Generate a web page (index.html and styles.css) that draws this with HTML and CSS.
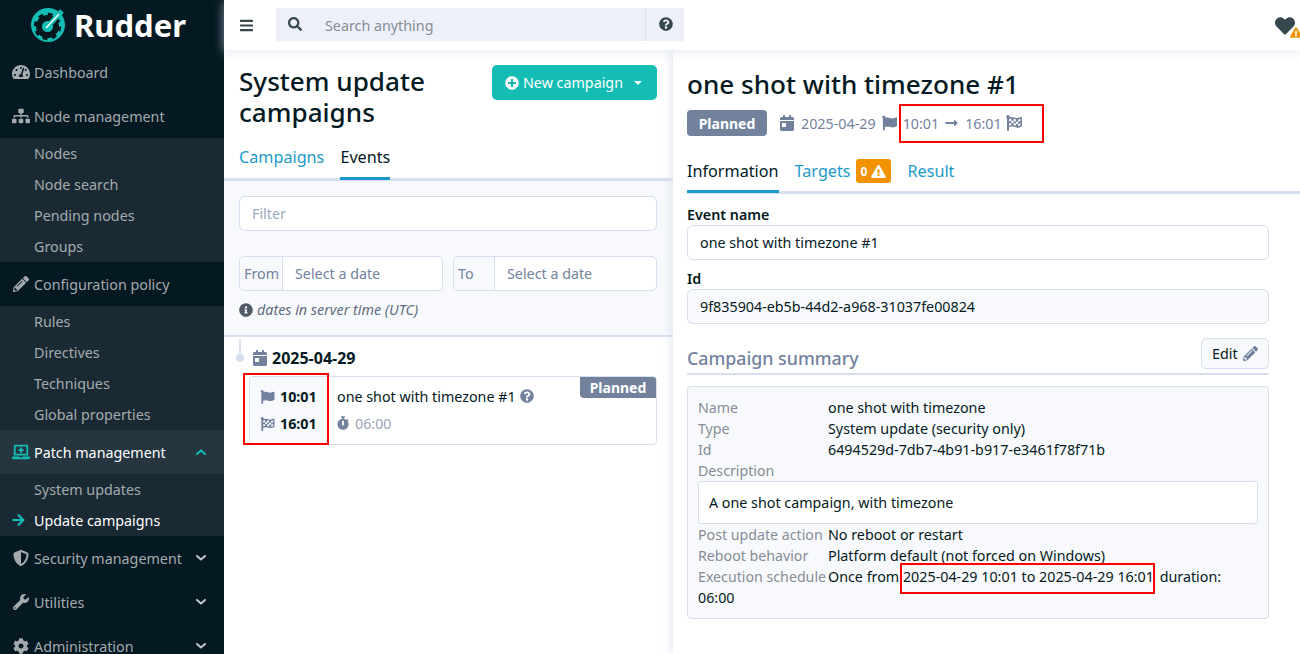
FILE: index.html
```html
<!DOCTYPE html>
<html lang="en">
<head>
<meta charset="utf-8">
<title>Rudder - System update campaigns</title>
<link rel="stylesheet" href="styles.css">
</head>
<body>
<svg class="sprite" xmlns="http://www.w3.org/2000/svg">
<symbol id="i-search" viewBox="0 0 512 512"><path d="M505 442.7L405.3 343c-4.5-4.5-10.6-7-17-7H372c27.6-35.3 44-79.7 44-128C416 93.1 322.9 0 208 0S0 93.1 0 208s93.1 208 208 208c48.3 0 92.7-16.4 128-44v16.3c0 6.4 2.5 12.5 7 17l99.7 99.7c9.4 9.4 24.6 9.4 33.9 0l28.3-28.3c9.4-9.4 9.4-24.6.1-34zM208 336c-70.7 0-128-57.2-128-128 0-70.7 57.2-128 128-128 70.7 0 128 57.2 128 128 0 70.7-57.2 128-128 128z"/></symbol>
<symbol id="i-bars" viewBox="0 0 448 512"><path d="M16 132h416c8.837 0 16-7.163 16-16V76c0-8.837-7.163-16-16-16H16C7.163 60 0 67.163 0 76v40c0 8.837 7.163 16 16 16zm0 160h416c8.837 0 16-7.163 16-16v-40c0-8.837-7.163-16-16-16H16c-8.837 0-16 7.163-16 16v40c0 8.837 7.163 16 16 16zm0 160h416c8.837 0 16-7.163 16-16v-40c0-8.837-7.163-16-16-16H16c-8.837 0-16 7.163-16 16v40c0 8.837 7.163 16 16 16z"/></symbol>
<symbol id="i-question" viewBox="0 0 512 512"><path d="M504 256c0 136.997-111.043 248-248 248S8 392.997 8 256C8 119.083 119.043 8 256 8s248 111.083 248 248zM262.655 90c-54.497 0-89.255 22.957-116.549 63.758-3.536 5.286-2.353 12.415 2.715 16.258l34.699 26.31c5.205 3.947 12.621 3.008 16.665-2.122 17.864-22.658 30.113-35.797 57.303-35.797 20.429 0 45.698 13.148 45.698 32.958 0 14.976-12.363 22.667-32.534 33.976C247.128 238.528 216 254.941 216 296v4c0 6.627 5.373 12 12 12h56c6.627 0 12-5.373 12-12v-1.333c0-28.462 83.186-29.647 83.186-106.667 0-58.002-60.165-102-116.531-102zM256 338c-25.365 0-46 20.635-46 46 0 25.364 20.635 46 46 46s46-20.636 46-46c0-25.365-20.635-46-46-46z"/></symbol>
<symbol id="i-plus" viewBox="0 0 512 512"><path d="M256 8C119 8 8 119 8 256s111 248 248 248 248-111 248-248S393 8 256 8zm144 276c0 6.6-5.4 12-12 12h-92v92c0 6.6-5.4 12-12 12h-56c-6.6 0-12-5.4-12-12v-92h-92c-6.6 0-12-5.4-12-12v-56c0-6.6 5.4-12 12-12h92v-92c0-6.6 5.4-12 12-12h56c6.6 0 12 5.4 12 12v92h92c6.6 0 12 5.4 12 12v56z"/></symbol>
<symbol id="i-warn" viewBox="0 0 576 512"><path d="M569.517 440.013C587.975 472.007 564.806 512 527.94 512H48.054c-36.937 0-59.999-40.055-41.577-71.987L246.423 23.985c18.467-32.009 64.72-31.951 83.154 0l239.94 416.028zM288 354c-25.405 0-46 20.595-46 46s20.595 46 46 46 46-20.595 46-46-20.595-46-46-46zm-43.673-165.346l7.418 136c.347 6.364 5.609 11.346 11.982 11.346h48.546c6.373 0 11.635-4.982 11.982-11.346l7.418-136c.375-6.874-5.098-12.654-11.982-12.654h-63.383c-6.884 0-12.356 5.78-11.981 12.654z"/></symbol>
<symbol id="i-heart" viewBox="0 0 512 512"><path d="M462.3 62.6C407.5 15.9 326 24.3 275.7 76.2L256 96.5l-19.7-20.3C186.1 24.3 104.5 15.9 49.7 62.6c-62.8 53.6-66.1 149.8-9.9 207.9l193.5 199.8c12.5 12.9 32.8 12.9 45.3 0l193.5-199.8c56.3-58.1 53-154.3-9.8-207.9z"/></symbol>
<symbol id="i-cal" viewBox="0 0 448 512"><path d="M0 464c0 26.5 21.5 48 48 48h352c26.5 0 48-21.5 48-48V192H0v272zm64-192c0-8.8 7.2-16 16-16h96c8.8 0 16 7.2 16 16v96c0 8.8-7.2 16-16 16H80c-8.8 0-16-7.2-16-16v-96zM400 64h-48V16c0-8.8-7.2-16-16-16h-32c-8.8 0-16 7.2-16 16v48H160V16c0-8.8-7.2-16-16-16h-32c-8.8 0-16 7.2-16 16v48H48C21.5 64 0 85.5 0 112v48h448v-48c0-26.5-21.5-48-48-48z"/></symbol>
<symbol id="i-flag" viewBox="0 0 512 512"><path d="M349.565 98.783C295.978 98.783 251.721 64 184.348 64c-24.955 0-47.309 4.384-68.045 12.013a55.947 55.947 0 0 0 3.586-23.562C118.117 24.015 94.806 1.206 66.338.048 34.345-1.254 8 24.296 8 56c0 19.026 9.497 35.825 24 45.945V488c0 13.255 10.745 24 24 24h16c13.255 0 24-10.745 24-24v-94.4c28.311-12.064 63.582-22.122 114.435-22.122 53.588 0 97.844 34.783 165.217 34.783 48.169 0 86.667-16.294 122.505-40.858C506.84 359.452 512 349.571 512 339.045v-243.1c0-23.393-24.269-38.87-45.485-29.016-34.338 15.948-76.454 31.854-116.95 31.854z"/></symbol>
<symbol id="i-check" viewBox="0 0 512 512"><path d="M243.2 189.9V258c26.1 5.9 49.3 15.6 73.6 22.3v-68.2c-26-5.8-49.4-15.5-73.6-22.2zm223.3-123c-34.3 15.9-76.5 31.9-117 31.9C296 98.8 251.7 64 184.3 64c-25 0-47.3 4.4-68 12 2.8-7.3 4.1-15.2 3.6-23.6C118.1 24 94.8 1.2 66.3 0 34.3-1.3 8 24.3 8 56c0 19 9.5 35.8 24 45.9V488c0 13.3 10.7 24 24 24h16c13.3 0 24-10.7 24-24v-94.4c28.3-12.1 63.6-22.1 114.4-22.1 53.6 0 97.8 34.8 165.2 34.8 48.2 0 86.7-16.3 122.5-40.9 8.7-6 13.8-15.8 13.8-26.4V95.9c.1-23.3-24.2-38.8-45.4-29zM169.6 325.5c-25.8 2.7-50 8.2-73.6 16.6v-70.5c26.2-9.3 47.5-15 73.6-17.4zM464 191c-23.6 9.8-46.3 19.5-73.6 23.9V286c24.8-3.4 51.4-11.8 73.6-26v70.5c-25.1 16.1-48.5 24.7-73.6 27.1V286c-27 3.7-47.9 1.5-73.6-5.6v67.4c-23.9-7.4-47.3-16.7-73.6-21.3V258c-19.7-4.4-40.8-6.8-73.6-3.8v-70c-22.4 3.1-44.6 10.2-73.6 20.9v-70.5c33.2-12.2 50.1-19.8 73.6-22v71.6c27-3.7 48.4-1.3 73.6 5.7v-67.4c23.7 7.4 47.2 16.7 73.6 21.3v68.4c23.7 5.3 47.6 6.9 73.6 2.7V143c27-4.8 52.3-13.6 73.6-22.5z"/></symbol>
<symbol id="i-dash" viewBox="0 0 576 512"><path d="M288 32C128.94 32 0 160.94 0 320c0 52.8 14.25 102.26 39.06 144.8 5.61 9.62 16.3 15.2 27.44 15.2h443c11.14 0 21.83-5.58 27.44-15.2C561.75 422.26 576 372.8 576 320c0-159.06-128.94-288-288-288zm0 64c14.71 0 26.58 10.13 30.32 23.65-1.11 2.26-2.64 4.23-3.45 6.67l-9.22 27.67c-5.13 3.49-10.97 6.01-17.64 6.01-17.67 0-32-14.33-32-32S270.33 96 288 96zM96 384c-17.67 0-32-14.33-32-32s14.33-32 32-32 32 14.33 32 32-14.33 32-32 32zm48-160c-17.67 0-32-14.33-32-32s14.33-32 32-32 32 14.33 32 32-14.33 32-32 32zm246.77-72.41l-61.33 184C343.13 347.33 352 364.54 352 384c0 11.72-3.38 22.55-8.88 32H232.88c-5.5-9.45-8.88-20.28-8.88-32 0-33.94 26.5-61.43 59.9-63.59l61.34-184.01c4.17-12.56 17.73-19.45 30.36-15.17 12.57 4.19 19.35 17.79 15.17 30.36zm14.66 57.2l15.52-46.55c3.47-1.29 7.13-2.23 11.05-2.23 17.67 0 32 14.33 32 32s-14.33 32-32 32c-11.38-.01-20.89-6.28-26.57-15.22zM480 384c-17.67 0-32-14.33-32-32s14.33-32 32-32 32 14.33 32 32-14.33 32-32 32z"/></symbol>
<symbol id="i-sitemap" viewBox="0 0 640 512"><path d="M128 352H32c-17.67 0-32 14.33-32 32v96c0 17.67 14.33 32 32 32h96c17.67 0 32-14.33 32-32v-96c0-17.67-14.33-32-32-32zm-24-80h192v48h48v-48h192v48h48v-57.59c0-21.17-17.23-38.41-38.41-38.41H344v-64h40c17.67 0 32-14.33 32-32V32c0-17.67-14.33-32-32-32H256c-17.67 0-32 14.33-32 32v96c0 17.67 14.33 32 32 32h40v64H94.41C73.23 224 56 241.23 56 262.41V320h48v-48zm264 80h-96c-17.67 0-32 14.33-32 32v96c0 17.67 14.33 32 32 32h96c17.67 0 32-14.33 32-32v-96c0-17.67-14.33-32-32-32zm240 0h-96c-17.67 0-32 14.33-32 32v96c0 17.67 14.33 32 32 32h96c17.67 0 32-14.33 32-32v-96c0-17.67-14.33-32-32-32z"/></symbol>
<symbol id="i-pencil" viewBox="0 0 512 512"><path d="M497.9 142.1l-46.1 46.1c-4.7 4.7-12.3 4.7-17 0l-111-111c-4.7-4.7-4.7-12.3 0-17l46.1-46.1c18.7-18.7 49.1-18.7 67.9 0l60.1 60.1c18.8 18.7 18.8 49.1 0 67.9zM284.2 99.8L21.6 362.4.4 483.9c-2.9 16.4 11.4 30.6 27.8 27.8l121.5-21.3 262.6-262.6c4.7-4.7 4.7-12.3 0-17l-111-111c-4.8-4.7-12.4-4.7-17.1 0zM124.1 339.9c-5.5-5.5-5.5-14.3 0-19.8l154-154c5.5-5.5 14.3-5.5 19.8 0s5.5 14.3 0 19.8l-154 154c-5.5 5.5-14.3 5.5-19.8 0zM88 424h48v36.3l-64.5 11.3-31.1-31.1L51.7 376H88v48z"/></symbol>
<symbol id="i-laptop" viewBox="0 0 640 512"><path d="M232 224h56v56a8 8 0 0 0 8 8h48a8 8 0 0 0 8-8v-56h56a8 8 0 0 0 8-8v-48a8 8 0 0 0-8-8h-56v-56a8 8 0 0 0-8-8h-48a8 8 0 0 0-8 8v56h-56a8 8 0 0 0-8 8v48a8 8 0 0 0 8 8zM576 48a48.14 48.14 0 0 0-48-48H112a48.14 48.14 0 0 0-48 48v336h512zm-64 272H128V64h384zm112 96H381.54c-.74 19.81-14.71 32-32.74 32H288c-18.69 0-33.02-17.47-32.77-32H16a16 16 0 0 0-16 16v16a64.19 64.19 0 0 0 64 64h512a64.19 64.19 0 0 0 64-64v-16a16 16 0 0 0-16-16z"/></symbol>
<symbol id="i-shield" viewBox="0 0 512 512"><path d="M466.5 83.7l-192-80a48.15 48.15 0 0 0-36.9 0l-192 80C27.7 91.1 16 108.6 16 128c0 198.5 114.5 335.7 221.5 380.3 11.8 4.9 25.1 4.9 36.9 0C360.1 472.6 496 349.3 496 128c0-19.4-11.7-36.9-29.5-44.3zM256.1 446.3l-.1-381 175.9 73.3c-3.3 151.4-82.1 261.1-175.8 307.7z"/></symbol>
<symbol id="i-wrench" viewBox="0 0 512 512"><path d="M507.73 109.1c-2.24-9.03-13.54-12.09-20.12-5.51l-74.36 74.36-67.88-11.31-11.31-67.88 74.36-74.36c6.62-6.62 3.43-17.9-5.66-20.16-47.38-11.74-99.55.91-136.58 37.93-39.64 39.64-50.55 97.1-34.05 147.2L18.74 402.76c-24.99 24.99-24.99 65.51 0 90.5 24.99 24.99 65.51 24.99 90.5 0l213.21-213.21c50.12 16.71 107.47 5.68 147.37-34.22 37.07-37.07 49.7-89.32 37.91-136.73zM64 472c-13.25 0-24-10.75-24-24 0-13.26 10.75-24 24-24s24 10.74 24 24c0 13.25-10.75 24-24 24z"/></symbol>
<symbol id="i-cog" viewBox="0 0 512 512"><path d="M487.4 315.7l-42.6-24.6c4.3-23.2 4.3-47 0-70.2l42.6-24.6c4.9-2.8 7.1-8.6 5.5-14-11.1-35.6-30-67.8-54.7-94.6-3.8-4.1-10-5.1-14.8-2.3L380.8 110c-17.9-15.4-38.5-27.3-60.8-35.1V25.8c0-5.6-3.9-10.5-9.4-11.7-36.7-8.2-74.3-7.8-109.2 0-5.5 1.2-9.4 6.1-9.4 11.7V75c-22.2 7.9-42.8 19.8-60.8 35.1L88.7 85.5c-4.9-2.8-11-1.9-14.8 2.3-24.7 26.7-43.6 58.9-54.7 94.6-1.7 5.4.6 11.2 5.5 14L67.3 221c-4.3 23.2-4.3 47 0 70.2l-42.6 24.6c-4.9 2.8-7.1 8.6-5.5 14 11.1 35.6 30 67.8 54.7 94.6 3.8 4.1 10 5.1 14.8 2.3l42.6-24.6c17.9 15.4 38.5 27.3 60.8 35.1v49.2c0 5.6 3.9 10.5 9.4 11.7 36.7 8.2 74.3 7.8 109.2 0 5.5-1.2 9.4-6.1 9.4-11.7v-49.2c22.2-7.9 42.8-19.8 60.8-35.1l42.6 24.6c4.9 2.8 11 1.9 14.8-2.3 24.7-26.7 43.6-58.9 54.7-94.6 1.5-5.5-.7-11.3-5.6-14.1zM256 336c-44.1 0-80-35.9-80-80s35.9-80 80-80 80 35.9 80 80-35.9 80-80 80z"/></symbol>
<symbol id="i-arrow" viewBox="0 0 448 512"><path d="M190.5 66.9l22.2-22.2c9.4-9.4 24.6-9.4 33.9 0L441 239c9.4 9.4 9.4 24.6 0 33.9L246.6 467.3c-9.4 9.4-24.6 9.4-33.9 0l-22.2-22.2c-9.5-9.5-9.3-25 .4-34.3L311.4 296H24c-13.3 0-24-10.7-24-24v-32c0-13.3 10.7-24 24-24h287.4L190.9 101.2c-9.8-9.3-10-24.8-.4-34.3z"/></symbol>
<symbol id="i-long" viewBox="0 0 448 512"><path d="M313.941 216H12c-6.627 0-12 5.373-12 12v56c0 6.627 5.373 12 12 12h301.941v46.059c0 21.382 25.851 32.09 40.971 16.971l86.059-86.059c9.373-9.373 9.373-24.569 0-33.941l-86.059-86.059c-15.119-15.119-40.971-4.411-40.971 16.971V216z"/></symbol>
<symbol id="i-watch" viewBox="0 0 448 512"><path d="M432 304c0 114.9-93.1 208-208 208S16 418.9 16 304c0-104 76.3-190.2 176-205.5V64h-28c-6.6 0-12-5.4-12-12V12c0-6.6 5.4-12 12-12h120c6.6 0 12 5.4 12 12v40c0 6.6-5.4 12-12 12h-28v34.5c37.5 5.8 71.7 21.6 99.7 44.6l27.5-27.5c4.7-4.7 12.3-4.7 17 0l28.3 28.3c4.7 4.7 4.7 12.3 0 17l-29.4 29.4-.6.6C419.7 223.3 432 262.2 432 304zm-176 36V188.5c0-6.6-5.4-12-12-12h-40c-6.6 0-12 5.4-12 12V340c0 6.6 5.4 12 12 12h40c6.6 0 12-5.4 12-12z"/></symbol>
<symbol id="i-info" viewBox="0 0 512 512"><path d="M256 8C119.043 8 8 119.083 8 256c0 136.997 111.043 248 248 248s248-111.003 248-248C504 119.083 392.957 8 256 8zm0 110c23.196 0 42 18.804 42 42s-18.804 42-42 42-42-18.804-42-42 18.804-42 42-42zm56 254c0 6.627-5.373 12-12 12h-88c-6.627 0-12-5.373-12-12v-24c0-6.627 5.373-12 12-12h12v-64h-12c-6.627 0-12-5.373-12-12v-24c0-6.627 5.373-12 12-12h64c6.627 0 12 5.373 12 12v100h12c6.627 0 12 5.373 12 12v24z"/></symbol>
<symbol id="i-chev" viewBox="0 0 10 6"><path d="M1 1l4 3.6L9 1" fill="none" stroke="currentColor" stroke-width="2" stroke-linecap="round" stroke-linejoin="round"/></symbol>
</svg>

<aside class="sidebar">
  <div class="logo">
    <svg class="logo-mark" viewBox="0 0 34 34">
      <circle cx="17" cy="17" r="17" fill="#13bdb4"/>
      <circle cx="16.5" cy="18.5" r="8.5" fill="none" stroke="#04191f" stroke-width="6"/>
      <circle cx="16.5" cy="18.5" r="12.2" fill="none" stroke="#04191f" stroke-width="3" stroke-dasharray="4.8 4.78"/>
      <path d="M19 16L31 3" stroke="#13bdb4" stroke-width="5"/>
      <circle cx="16.5" cy="18.5" r="4" fill="none" stroke="#13bdb4" stroke-width="1.8"/>
      <path d="M15 20L28 6" stroke="#f2fbfa" stroke-width="1.5"/>
    </svg>
    <span class="logo-text">Rudder</span>
  </div>
  <nav>
    <a class="nav-item"><svg class="nav-ico"><use href="#i-dash"/></svg><span>Dashboard</span></a>
    <a class="nav-item"><svg class="nav-ico"><use href="#i-sitemap"/></svg><span>Node management</span></a>
    <div class="sub">
      <a class="sub-item">Nodes</a>
      <a class="sub-item">Node search</a>
      <a class="sub-item">Pending nodes</a>
      <a class="sub-item">Groups</a>
    </div>
    <a class="nav-item"><svg class="nav-ico"><use href="#i-pencil"/></svg><span>Configuration policy</span></a>
    <div class="sub">
      <a class="sub-item">Rules</a>
      <a class="sub-item">Directives</a>
      <a class="sub-item">Techniques</a>
      <a class="sub-item">Global properties</a>
    </div>
    <a class="nav-item nav-open"><svg class="nav-ico"><use href="#i-laptop"/></svg><span>Patch management</span><svg class="chev chev-up"><use href="#i-chev"/></svg></a>
    <div class="sub">
      <a class="sub-item">System updates</a>
      <a class="sub-item sub-active"><svg class="sub-arrow"><use href="#i-arrow"/></svg>Update campaigns</a>
    </div>
    <a class="nav-item"><svg class="nav-ico"><use href="#i-shield"/></svg><span>Security management</span><svg class="chev"><use href="#i-chev"/></svg></a>
    <a class="nav-item"><svg class="nav-ico"><use href="#i-wrench"/></svg><span>Utilities</span><svg class="chev"><use href="#i-chev"/></svg></a>
    <a class="nav-item"><svg class="nav-ico"><use href="#i-cog"/></svg><span>Administration</span><svg class="chev"><use href="#i-chev"/></svg></a>
  </nav>
</aside>

<div class="main">
  <header class="topbar">
    <svg class="burger"><use href="#i-bars"/></svg>
    <div class="search">
      <svg class="search-ico"><use href="#i-search"/></svg>
      <span class="search-text">Search anything</span>
      <span class="search-help"><svg class="help-ico"><use href="#i-question"/></svg></span>
    </div>
    <div class="health">
      <svg class="heart"><use href="#i-heart"/></svg>
      <svg class="heart-warn"><use href="#i-warn"/></svg>
    </div>
  </header>
  <div class="content">
    <section class="left">
      <div class="left-head">
        <h1 class="left-title">System update campaigns</h1>
        <button class="btn-new"><svg class="btn-ico"><use href="#i-plus"/></svg><span>New campaign</span><i class="caret"></i></button>
      </div>
      <div class="tabs tabs-left">
        <a class="tab">Campaigns</a>
        <a class="tab tab-active">Events</a>
      </div>
      <div class="filters">
        <div class="input input-filter">Filter</div>
        <div class="dates">
          <div class="date"><span class="date-lab">From</span><span class="date-val">Select a date</span></div>
          <div class="date"><span class="date-lab">To</span><span class="date-val">Select a date</span></div>
        </div>
        <p class="hint"><svg class="hint-ico"><use href="#i-info"/></svg><em>dates in server time (UTC)</em></p>
      </div>
      <div class="timeline">
        <div class="day"><i class="dot"></i><svg class="day-ico"><use href="#i-cal"/></svg><span>2025-04-29</span></div>
        <div class="card">
          <div class="card-time">
            <div class="time-row"><svg class="time-ico"><use href="#i-flag"/></svg><b>10:01</b></div>
            <div class="time-row"><svg class="time-ico"><use href="#i-check"/></svg><b>16:01</b></div>
          </div>
          <div class="card-body">
            <div class="card-name">one shot with timezone #1<svg class="card-q"><use href="#i-question"/></svg></div>
            <div class="card-dur"><svg class="watch"><use href="#i-watch"/></svg>06:00</div>
          </div>
          <span class="card-badge">Planned</span>
        </div>
      </div>
    </section>
    <section class="right">
      <h2 class="right-title">one shot with timezone #1</h2>
      <div class="meta">
        <span class="badge">Planned</span>
        <svg class="meta-ico meta-cal"><use href="#i-cal"/></svg><span class="meta-date">2025-04-29</span>
        <svg class="meta-ico meta-flag"><use href="#i-flag"/></svg><span>10:01</span>
        <svg class="meta-long"><use href="#i-long"/></svg><span>16:01</span>
        <svg class="meta-ico meta-end"><use href="#i-check"/></svg>
      </div>
      <div class="tabs tabs-right">
        <a class="tab tab-active">Information</a>
        <a class="tab">Targets<span class="count">0<svg class="count-ico"><use href="#i-warn"/></svg></span></a>
        <a class="tab">Result</a>
      </div>
      <div class="form">
        <label class="lab">Event name</label>
        <div class="input">one shot with timezone #1</div>
        <label class="lab">Id</label>
        <div class="input input-ro">9f835904-eb5b-44d2-a968-31037fe00824</div>
        <div class="sum-head">
          <h3 class="sum-title">Campaign summary</h3>
          <button class="btn-edit">Edit<svg class="edit-ico"><use href="#i-pencil"/></svg></button>
        </div>
        <div class="summary">
          <div class="row"><span class="k">Name</span>one shot with timezone</div>
          <div class="row"><span class="k">Type</span>System update (security only)</div>
          <div class="row"><span class="k">Id</span>6494529d-7db7-4b91-b917-e3461f78f71b</div>
          <div class="row"><span class="k">Description</span></div>
          <div class="desc">A one shot campaign, with timezone</div>
          <div class="row"><span class="k">Post update action</span>No reboot or restart</div>
          <div class="row"><span class="k">Reboot behavior</span>Platform default (not forced on Windows)</div>
          <div class="row"><span class="k">Execution schedule</span>Once from 2025-04-29 10:01 to 2025-04-29 16:01 <span class="dur">duration:</span> 06:00</div>
        </div>
      </div>
    </section>
  </div>
</div>
<div class="mark mark-1"></div>
<div class="mark mark-2"></div>
<div class="mark mark-3"></div>
</body>
</html>
```
FILE: styles.css
```css
* { box-sizing: border-box; }
html, body { margin: 0; height: 654px; overflow: hidden; }
body { display: flex; font-family: "Noto Sans", sans-serif; font-size: 14.3px; color: #041922; background: #fff; position: relative; }
svg { fill: currentColor; display: block; flex: none; }
.sprite { position: absolute; width: 0; height: 0; }
a { color: inherit; text-decoration: none; }
h1, h2, h3, p { margin: 0; font-weight: 500; }

.sidebar { width: 224px; flex: none; background: #041922; color: #a4aaae; height: 654px; overflow: hidden; }
.logo { height: 50px; display: flex; align-items: center; padding-left: 31px; gap: 9px; }
.logo-mark { width: 34px; height: 34px; }
.logo-text { font-weight: 700; font-size: 31px; color: #fff; line-height: 1; }
.nav-item { height: 44px; display: flex; align-items: center; padding: 0 0 0 12px; }
.nav-ico { width: 18px; height: 16px; margin-right: 4px; }
.nav-item span { flex: 1; }
.nav-open { background: #253641; color: #fff; }
.nav-open .nav-ico { color: #13bdb4; }
.chev { width: 10px; height: 6px; margin-right: 18px; color: #c4c8cb; }
.chev-up { transform: rotate(180deg); color: #13bdb4; }
.sub { background: #1a2a34; }
.sub-item { height: 31px; display: flex; align-items: center; padding: 0 0 0 34px; position: relative; }
.sub-active { color: #fff; }
.sub-arrow { position: absolute; left: 12px; top: 8px; width: 13px; height: 14px; color: #13bdb4; }

.main { flex: 1; min-width: 0; display: flex; flex-direction: column; height: 654px; }
.topbar { height: 50px; flex: none; display: flex; align-items: center; padding-left: 16px; background: #fff; box-shadow: 0 2px 10px rgba(214,222,239,.6); position: relative; z-index: 2; }
.burger { width: 13px; height: 15px; color: #36474e; margin-right: 23px; }
.search { width: 408px; height: 33px; margin-top: -1px; display: flex; align-items: center; background: #edf0f9; color: #868d96; }
.search-ico { width: 14px; height: 14px; margin: -2px 0 0 12px; color: #36474e; }
.search-text { flex: 1; margin-left: 23px; padding-top: 1px; }
.search-help { width: 39px; height: 33px; display: flex; align-items: center; justify-content: center; border-left: 1px solid #d6deef; }
.help-ico { width: 14px; height: 14px; color: #36474e; margin: -2px 0 0 1px; }
.health { margin-left: auto; width: 26px; height: 30px; position: relative; overflow: hidden; }
.heart { width: 20px; height: 20px; color: #36474e; position: absolute; left: 1px; top: 6px; }
.heart-warn { width: 12px; height: 11px; color: #f39200; position: absolute; left: 16px; top: 17px; }

.content { flex: 1; display: flex; min-height: 0; }
.left { width: 449px; flex: none; background: #fff; display: flex; flex-direction: column; }
.left-head { display: flex; justify-content: space-between; align-items: flex-start; padding: 15px 16px 0 15px; height: 90px; }
.left-title { font-size: 26.1px; line-height: 31px; width: 240px; padding-top: 1px; }
.btn-new { width: 165px; height: 35px; border: 0; border-radius: 5px; background: #13bdb4; color: #fff; font: inherit; display: flex; align-items: center; padding: 0 0 0 13px; }
.btn-ico { width: 14px; height: 14px; margin-right: 4px; }
.caret { border: 4px solid transparent; border-top-color: #fff; border-bottom: 0; margin-left: 11px; }

.tabs { display: flex; border-bottom: 3px solid #d6deef; font-size: 16.2px; color: #1b9ac9; }
.tabs-left { height: 41px; padding-left: 15px; gap: 16px; }
.tab { display: flex; align-items: center; margin-bottom: -2px; padding-bottom: 7px; height: 40px; }
.tab-active { color: #041922; border-bottom: 3px solid #1b9ac9; padding-bottom: 4px; }
.filters { height: 156px; background: #f8f9fc; padding: 15px 16px 0 15px; border-bottom: 2px solid #d6deef; }
.input { height: 35px; border: 1px solid #d6deef; border-radius: 6px; background: #fff; display: flex; align-items: center; padding-left: 12px; }
.input-filter { color: #9aa8c0; }
.dates { display: flex; gap: 10px; margin-top: 25px; }
.date { flex: 1; height: 35px; display: flex; border: 1px solid #d6deef; border-radius: 5px; background: #fff; overflow: hidden; }
.date-lab { width: 43px; flex: none; background: #f8f9fc; border-right: 1px solid #d6deef; display: flex; align-items: center; padding-left: 4px; color: #72829d; }
.date:last-child .date-lab { width: 41px; }
.date-val { display: flex; align-items: center; padding-left: 12px; color: #72829d; }
.hint { display: flex; align-items: center; gap: 4px; margin-top: 9px; color: #5f6d80; font-weight: 400; }
.hint-ico { width: 14px; height: 14px; color: #4f5b66; }

.timeline { position: relative; padding: 11px 16px 0 20px; }
.day { display: flex; align-items: center; height: 20px; font-size: 16px; font-weight: 700; position: relative; padding-left: 9px; }
.dot { position: absolute; left: -8px; top: 6px; width: 8px; height: 8px; border-radius: 50%; background: #d6deef; }
.dot::before { content: ""; position: absolute; left: 3px; bottom: 6px; width: 2px; height: 17px; background: #d6deef; }
.day-ico { width: 14px; height: 16px; color: #72829d; margin-right: 5px; }
.card { display: flex; position: relative; margin: 8px 0 0 5px; height: 69px; border: 1px solid #d6deef; border-radius: 4px; overflow: hidden; }
.card-time { width: 79px; flex: none; background: #f8f9fc; border-right: 1px solid #d6deef; padding: 6px 0 0 10px; }
.time-row { display: flex; align-items: center; gap: 5px; height: 27px; }
.time-ico { width: 15px; height: 14px; color: #72829d; }
.card-body { padding: 7px 0 0 8px; }
.card-name { display: flex; align-items: center; height: 24px; gap: 4px; }
.card-q { width: 14px; height: 14px; color: #72829d; }
.card-dur { display: flex; align-items: center; gap: 6px; color: #9aa4b5; margin-top: 3px; height: 24px; }
.watch { width: 12px; height: 14px; color: #72829d; }
.card-badge { position: absolute; right: 0; top: 0; height: 21px; width: 76px; background: #72829d; color: #fff; font-size: 14px; font-weight: 700; display: flex; align-items: center; justify-content: center; border-bottom-left-radius: 4px; }

.right { flex: 1; min-width: 0; padding: 0 31px 0 14px; box-shadow: -2px 0 8px rgba(214,222,239,.7); position: relative; background: #fff; }
.right-title { font-size: 26.1px; line-height: 34px; padding-top: 17px; box-sizing: content-box; height: 34px; }
.meta { display: flex; align-items: center; height: 26px; margin-top: 9px; color: #72829d; }
.badge { width: 80px; height: 26px; border-radius: 4px; background: #72829d; color: #fff; font-size: 14px; font-weight: 700; display: flex; align-items: center; justify-content: center; margin-right: 13px; }
.meta-ico { width: 14px; height: 16px; }
.meta-cal { margin-right: 7px; }
.meta-date { margin-right: 6px; }
.meta-flag { width: 15px; margin-right: 6px; }
.meta-long { width: 15px; height: 14px; margin: 0 6px 0 5px; }
.meta-end { width: 16px; margin-left: 4px; }
.tabs-right { height: 44px; margin-top: 14px; gap: 16px; margin-right: -31px; }
.tabs-right .tab { height: 43px; padding-top: 6px; }
.count { display: inline-flex; align-items: center; gap: 4px; height: 24px; padding: 0 5px; border-radius: 3px; background: #f39200; color: #fff; font-size: 12px; font-weight: 700; margin-left: 5px; }
.count-ico { width: 15px; height: 13px; }
.form { padding-top: 10px; }
.lab { display: block; font-weight: 600; height: 21px; line-height: 21px; }
.input + .lab { margin-top: 8px; }
.input-ro { background: #f8f9fc; }
.sum-head { display: flex; justify-content: space-between; align-items: flex-start; margin-top: 14px; height: 37px; border-bottom: 2px solid #d6deef; }
.sum-title { font-size: 17.8px; line-height: 40px; color: #72829d; font-weight: 500; }
.btn-edit { width: 68px; height: 31px; border: 1px solid #d6deef; border-radius: 5px; background: #f8f9fc; font: inherit; color: #041922; display: flex; align-items: center; gap: 5px; padding: 0 0 0 10px; }
.edit-ico { width: 15px; height: 15px; color: #72829d; }
.summary { margin-top: 11px; height: 233px; padding: 10px 10px 0; border: 1px solid #d6deef; border-radius: 4px; background: #f8f9fc; line-height: 21px; }
.k { display: inline-block; width: 130px; color: #868d96; white-space: nowrap; font-size: 14.2px; }
.dur { margin-left: 2px; }
.desc { height: 43px; padding-left: 10px; display: flex; align-items: center; border: 1px solid #d6deef; border-radius: 3px; background: #fff; }

.mark { position: absolute; border: 2px solid #f00; }
.mark-1 { left: 899px; top: 104px; width: 145px; height: 39px; }
.mark-2 { left: 243px; top: 373px; width: 86px; height: 72px; }
.mark-3 { left: 900px; top: 563px; width: 255px; height: 31px; }
```
